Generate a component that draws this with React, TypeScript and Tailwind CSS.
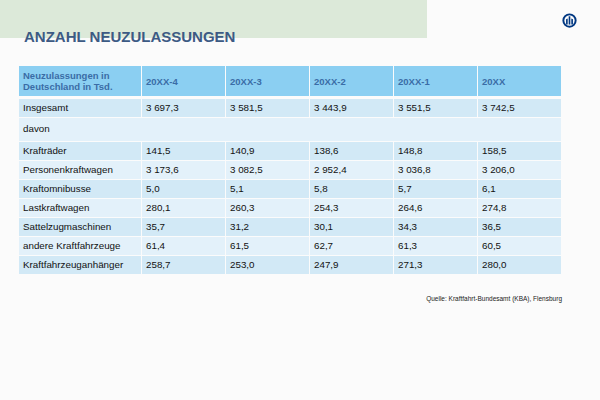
const years = ["20XX-4", "20XX-3", "20XX-2", "20XX-1", "20XX"];

const rows: { label: string; values: string[] }[] = [
  { label: "Krafträder", values: ["141,5", "140,9", "138,6", "148,8", "158,5"] },
  { label: "Personenkraftwagen", values: ["3 173,6", "3 082,5", "2 952,4", "3 036,8", "3 206,0"] },
  { label: "Kraftomnibusse", values: ["5,0", "5,1", "5,8", "5,7", "6,1"] },
  { label: "Lastkraftwagen", values: ["280,1", "260,3", "254,3", "264,6", "274,8"] },
  { label: "Sattelzugmaschinen", values: ["35,7", "31,2", "30,1", "34,3", "36,5"] },
  { label: "andere Kraftfahrzeuge", values: ["61,4", "61,5", "62,7", "61,3", "60,5"] },
  { label: "Kraftfahrzeuganhänger", values: ["258,7", "253,0", "247,9", "271,3", "280,0"] },
];

function Logo() {
  return (
    <svg width="15" height="15" viewBox="0 0 20 20" className="text-[#003781]">
      <circle cx="10" cy="10" r="8.2" fill="none" stroke="currentColor" strokeWidth="2.6" />
      <path d="M5.4 8.4 L7.6 7.4 V15.4 H5.4 Z" fill="currentColor" />
      <rect x="8.9" y="4.4" width="2.2" height="11" fill="currentColor" />
      <path d="M12.4 7.4 L14.6 8.4 V15.4 H12.4 Z" fill="currentColor" />
    </svg>
  );
}

function Row({ label, values, dark }: { label: string; values: string[]; dark: boolean }) {
  const bg = dark ? "bg-[#d2e9f6]" : "bg-[#e3f1fa]";
  return (
    <div className="grid h-[18px] grid-cols-[122px_repeat(5,83px)] gap-x-px">
      <div className={`flex items-center pl-[4px] ${bg}`}>{label}</div>
      {values.map((v, i) => (
        <div key={i} className={`flex items-center pl-[4px] ${bg}`}>
          {v}
        </div>
      ))}
    </div>
  );
}

export default function App() {
  return (
    <div
      className="h-[400px] w-[600px] overflow-hidden bg-[#fbfbfb]"
      style={{ fontFamily: '"Liberation Sans", Arial, sans-serif' }}
    >
      {/* Top band + logo */}
      <div className="flex items-start justify-between">
        <div className="h-[38px] w-[427px] bg-[#dce9d9]" />
        <div className="mr-[23px] mt-[13px]">
          <Logo />
        </div>
      </div>

      <h1 className="-mt-[9px] pl-[24px] text-[15px] font-bold leading-[15px] text-[#3c5a84]">
        ANZAHL NEUZULASSUNGEN
      </h1>

      {/* Table */}
      <div className="ml-[19px] mt-[22px] flex flex-col gap-y-px text-[9.8px] text-[#111]">
        <div className="mb-[2px] grid h-[30px] grid-cols-[122px_repeat(5,83px)] gap-x-px text-[9.5px] font-bold leading-[11px] text-[#3a6ca6]">
          <div className="flex items-center bg-[#8bcff2] pl-[4px]">
            Neuzulassungen in
            <br />
            Deutschland in Tsd.
          </div>
          {years.map((y) => (
            <div key={y} className="flex items-center bg-[#8bcff2] pl-[4px]">
              {y}
            </div>
          ))}
        </div>

        <Row label="Insgesamt" values={["3 697,3", "3 581,5", "3 443,9", "3 551,5", "3 742,5"]} dark />
        <div className="flex h-[23px] w-[542px] items-center bg-[#e3f1fa] pl-[4px]">davon</div>
        {rows.map((r, i) => (
          <Row key={r.label} label={r.label} values={r.values} dark={i % 2 === 0} />
        ))}
      </div>

      <div className="mt-[21px] w-[562px] text-right text-[6.5px] leading-[8px] text-[#222]">
        Quelle: Kraftfahrt-Bundesamt (KBA), Flensburg
      </div>
    </div>
  );
}
